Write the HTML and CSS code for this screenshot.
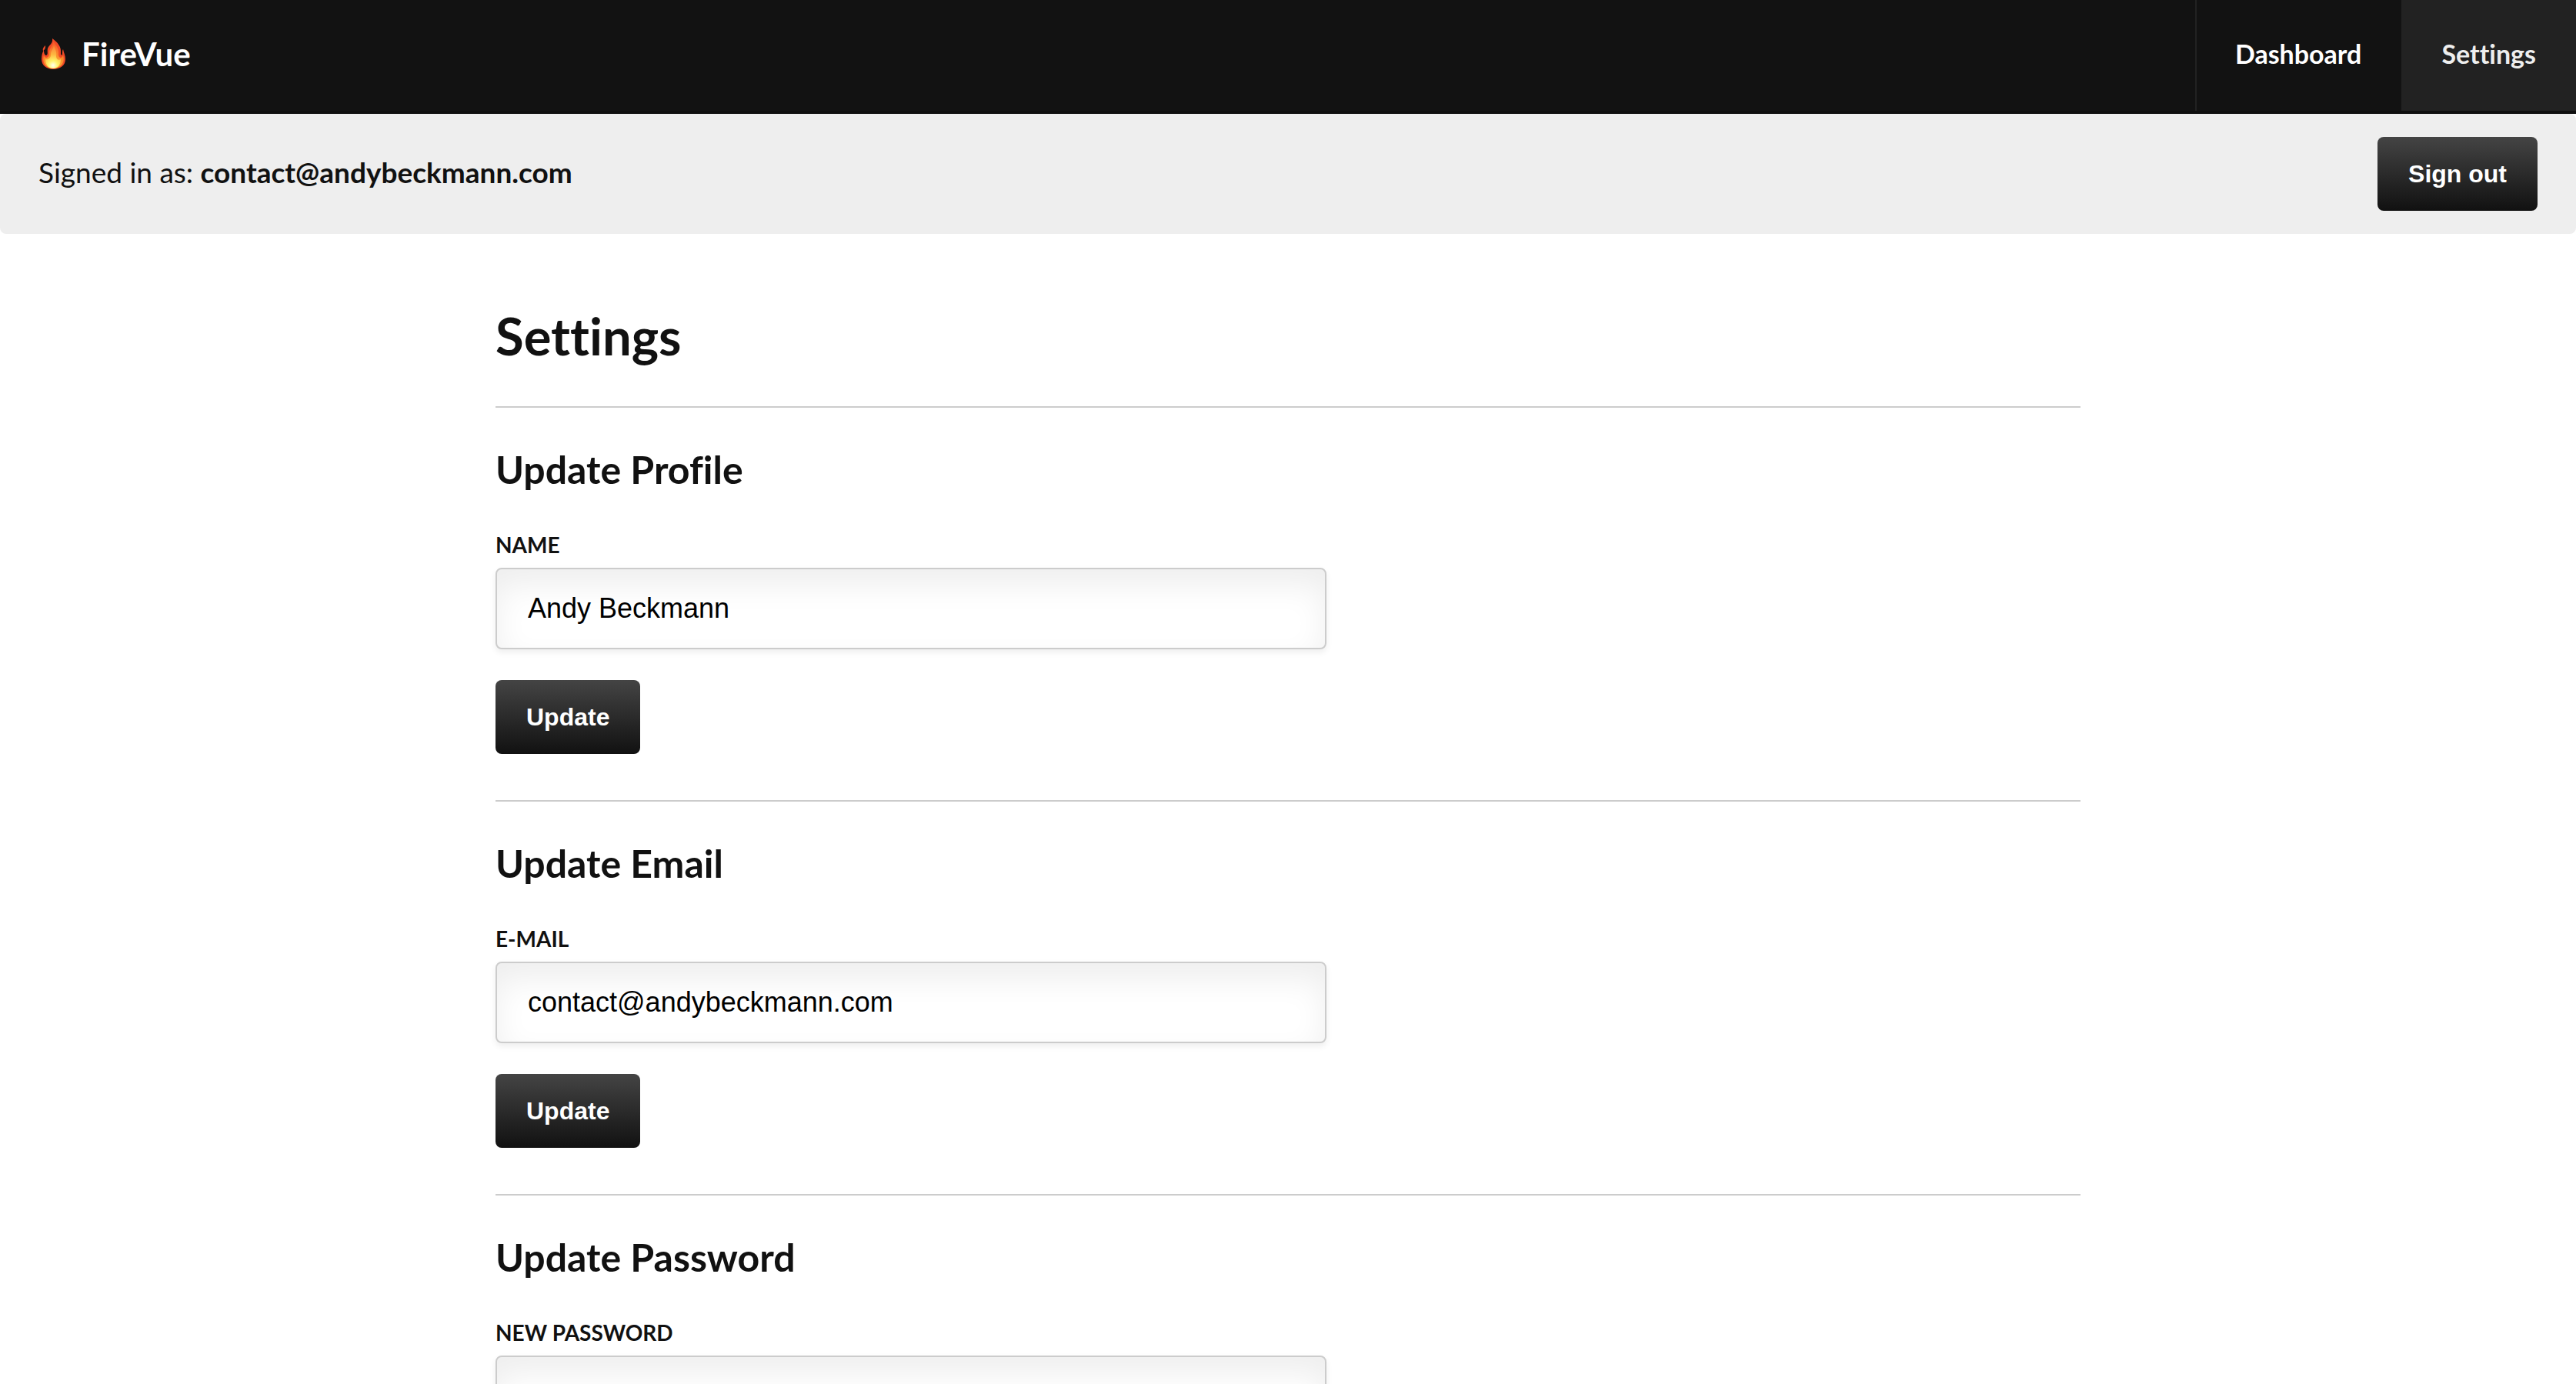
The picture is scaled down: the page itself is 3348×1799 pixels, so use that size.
FILE: index.html
```html
<!DOCTYPE html>
<html lang="en">
<head>
<meta charset="utf-8">
<meta name="viewport" content="width=device-width, initial-scale=1">
<title>Settings - FireVue</title>
<link rel="stylesheet" href="styles.css">
</head>
<body>
<header class="header">
  <a class="brand" href="#">
    <svg class="brand-icon" viewBox="0 0 32 40" aria-hidden="true">
      <defs>
        <radialGradient id="flame" gradientUnits="userSpaceOnUse" cx="15" cy="35" r="32">
          <stop offset="0" stop-color="#ffc93c"/>
          <stop offset=".45" stop-color="#fb8a2c"/>
          <stop offset="1" stop-color="#f4552b"/>
        </radialGradient>
        <radialGradient id="core" gradientUnits="userSpaceOnUse" cx="15" cy="35" r="24">
          <stop offset="0" stop-color="#fffff0"/>
          <stop offset=".25" stop-color="#fff36a"/>
          <stop offset=".6" stop-color="#fdb640"/>
          <stop offset="1" stop-color="#f98a3c"/>
        </radialGradient>
      </defs>
      <path fill="#f04a26" d="M14 0C21 5 26 11 25 19C25 22 27 23 27 20C27 17 27 15 28 14C29 19 31 22 31 27C31 35 24 40 15 40C7 40 0 35 0 27C0 22 1 18 3 15C3 19 4 22 6 22C9 21 7 17 8 13C10 8 15 7 14 0ZM5 9C5 12 5 14 2 16C1 13 3 11 5 9Z"/>
      <path fill="url(#flame)" d="M15 4C19 9 23 13 22 21C22 25 26 27 28 22C31 31 25 39 15 39C6 39 0 31 3 22C5 27 10 25 10 20C9 13 15 11 15 4Z"/>
      <path fill="url(#core)" d="M16 9C18 14 20 18 19 23C19 27 22 29 25 27C25 34 21 39 15 39C9 39 5 34 5 27C8 28 12 26 12 21C12 16 15 14 16 9Z"/>
    </svg>
    <span>FireVue</span>
  </a>
  <nav class="nav">
    <a class="nav-link" href="#">Dashboard</a>
    <a class="nav-link nav-link-active" href="#" aria-current="page">Settings</a>
  </nav>
</header>
<div class="account-bar">
  <p class="account-text">Signed in as: <strong>contact@andybeckmann.com</strong></p>
  <button class="button" type="button">Sign out</button>
</div>
<main class="main">
  <h1 class="title">Settings</h1>
  <form class="section">
    <h2 class="section-title">Update Profile</h2>
    <label class="label" for="name">Name</label>
    <input class="input" id="name" type="text" value="Andy Beckmann">
    <button class="button" type="submit">Update</button>
  </form>
  <form class="section">
    <h2 class="section-title">Update Email</h2>
    <label class="label" for="email">E-mail</label>
    <input class="input" id="email" type="email" value="contact@andybeckmann.com">
    <button class="button" type="submit">Update</button>
  </form>
  <form class="section">
    <h2 class="section-title">Update Password</h2>
    <label class="label" for="password">New Password</label>
    <input class="input" id="password" type="password">
  </form>
</main>
</body>
</html>
```

FILE: styles.css
```css
* {
  box-sizing: border-box;
}

body {
  margin: 0;
  background: #fff;
  color: #111;
  font-family: Lato, "Liberation Sans", sans-serif;
  font-size: 37px;
  font-variant-ligatures: none;
}

h1, h2, p {
  margin: 0;
}

.header {
  display: flex;
  justify-content: space-between;
  background: #121212;
  border-bottom: 4px solid #0f0f0f;
}

.brand {
  display: flex;
  align-items: center;
  gap: 20px;
  padding: 0 0 4px 54px;
  color: #fff;
  font-size: 42px;
  font-weight: 700;
  line-height: 44px;
  text-decoration: none;
}

.brand-icon {
  width: 32px;
  height: 40px;
}

.nav {
  display: flex;
}

.nav-link {
  padding: 48px 52px 52px 50px;
  border-left: 2px solid #222;
  color: #fff;
  font-size: 34px;
  font-weight: 700;
  line-height: 44px;
  text-decoration: none;
}

.nav-link-active {
  background: #222;
  color: #eee;
}

.account-bar {
  display: flex;
  align-items: center;
  justify-content: space-between;
  padding: 30px 50px;
  border-radius: 8px;
  background: #eee;
}

.account-text {
  padding-bottom: 4px;
  font-weight: 400;
  line-height: 48px;
}

.account-text strong {
  font-weight: 700;
}

.button {
  padding: 0 40px;
  border: 0;
  border-radius: 8px;
  background: linear-gradient(#444, #111);
  color: #fff;
  font: bold 32px/96px "Liberation Sans", Arial, sans-serif;
}

.main {
  max-width: 2060px;
  margin: 0 auto;
  padding-top: 92px;
}

.title {
  margin-bottom: 52px;
  font-size: 67px;
  font-weight: 700;
  line-height: 80px;
}

.section {
  display: flex;
  flex-direction: column;
  align-items: flex-start;
  padding: 50px 0 60px;
  border-top: 2px solid #ccc;
}

.section-title {
  margin-bottom: 50px;
  font-size: 50px;
  font-weight: 700;
  line-height: 60px;
}

.label {
  margin-bottom: 12px;
  font-size: 28px;
  font-weight: 700;
  line-height: 36px;
  text-transform: uppercase;
}

.input {
  width: 100%;
  max-width: 1080px;
  height: 106px;
  margin-bottom: 40px;
  padding: 0 40px;
  border: 2px solid #ccc;
  border-radius: 8px;
  background: #fff;
  box-shadow: inset 0 20px 40px #eee, 0 4px 8px #eee;
  color: #000;
  font: 36px "Liberation Sans", Arial, sans-serif;
}
```
